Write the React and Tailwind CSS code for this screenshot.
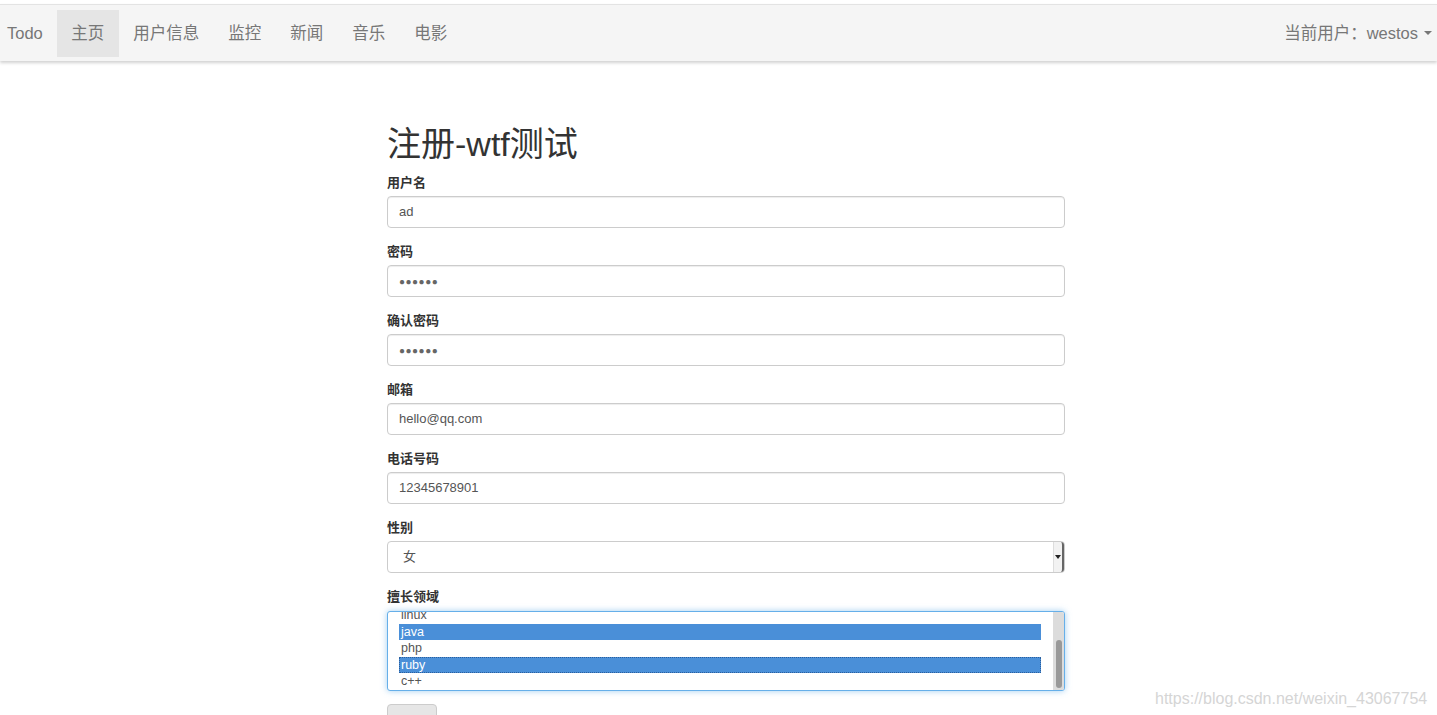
import React from "react";

const font = { fontFamily: '"Liberation Sans", "Noto Sans CJK SC", Arial, sans-serif' };

function Field({ label, children }) {
  return (
    <div className="mb-[14px]">
      <div className="h-[19px] mb-[4px] text-[13px] font-bold text-[#333] leading-[19px]">{label}</div>
      {children}
    </div>
  );
}

function Input({ value, dots }) {
  return (
    <div className="h-[32px] w-full rounded-[4px] border border-[#ccc] bg-white px-[11px] flex items-center text-[13px] text-[#555] shadow-[inset_0_1px_1px_rgba(0,0,0,0.075)]">
      {dots ? <span className="tracking-[0.5px] text-[#666] text-[10px]">●●●●●●</span> : value}
    </div>
  );
}

export default function App() {
  const navItems = ["主页", "用户信息", "监控", "新闻", "音乐", "电影"];
  return (
    <div className="relative min-h-[715px] bg-white overflow-hidden" style={font}>
      <div className="pt-[4px]">
        <div className="h-[57px] bg-[#f5f5f5] border-t border-[#e3e3e3] shadow-[0_2px_3px_rgba(0,0,0,0.18)] flex items-center justify-between">
          <div className="flex items-center h-full">
            <div className="pl-[7px] pr-[14px] text-[16.5px] text-[#777]">Todo</div>
            {navItems.map((n, i) => (
              <div
                key={n}
                className={
                  "h-[47px] flex items-center px-[14.5px] text-[16.5px] text-[#777] " +
                  (i === 0 ? "bg-[#e5e5e5] text-[#555]" : "")
                }
              >
                {n}
              </div>
            ))}
          </div>
          <div className="pr-[5px] flex items-center text-[16.5px] text-[#777]">
            当前用户：westos
            <span className="ml-[6px] inline-block w-0 h-0 border-l-[4px] border-r-[4px] border-t-[4px] border-l-transparent border-r-transparent border-t-[#777]" />
          </div>
        </div>
      </div>

      <div className="ml-[387px] w-[678px] mt-[65px]">
        <h1 className="text-[34px] leading-[37px] text-[#333] mb-[10px]">注册-wtf测试</h1>
        <Field label="用户名"><Input value="ad" /></Field>
        <Field label="密码"><Input dots /></Field>
        <Field label="确认密码"><Input dots /></Field>
        <Field label="邮箱"><Input value="hello@qq.com" /></Field>
        <Field label="电话号码"><Input value="12345678901" /></Field>
        <Field label="性别">
          <div className="h-[32px] w-full rounded-[4px] border border-[#ccc] bg-white flex items-center justify-between text-[13px] text-[#555]">
            <span className="pl-[15px]">女</span>
            <div className="h-[30px] w-[11px] border-l border-[#ddd] bg-[#f2f2f2] border-r-2 border-r-[#666] rounded-r-[3px] flex items-center justify-center">
              <span className="inline-block w-0 h-0 border-l-[3px] border-r-[3px] border-t-[4px] border-l-transparent border-r-transparent border-t-[#222]" />
            </div>
          </div>
        </Field>
        <div>
          <div className="h-[19px] mb-[5px] text-[13px] font-bold text-[#333] leading-[19px]">擅长领域</div>
          <div className="h-[80px] w-full rounded-[3px] border border-[#66afe9] bg-white shadow-[0_0_6px_rgba(102,175,233,0.6)] flex overflow-hidden">
            <div className="flex-1 pl-[11px] pr-[12px] text-[12.5px] leading-[16.5px] text-[#555] -mt-[5px]">
              <div className="pl-[2px] h-[16.5px]">linux</div>
              <div className="pl-[2px] h-[16.5px] bg-[#4a8fd8] text-white">java</div>
              <div className="pl-[2px] h-[16.5px]">php</div>
              <div className="pl-[2px] h-[16.5px] bg-[#4a8fd8] text-white outline-1 outline-dotted outline-[#2a5f9e] -outline-offset-1">ruby</div>
              <div className="pl-[2px] h-[16.5px]">c++</div>
            </div>
            <div className="w-[11px] h-full bg-[#dcdcdc] flex flex-col justify-end pb-[2px] items-center">
              <div className="w-[6px] h-[48px] rounded-[3px] bg-[#999]" />
            </div>
          </div>
        </div>
        <div className="mt-[13px] w-[50px] h-[30px] rounded-[4px] border border-[#ccc] bg-[#e6e6e6]" />
      </div>

      <div className="absolute left-[1155px] top-[687px] text-[16px] text-[#d5d5d5]">
        https://blog.csdn.net/weixin_43067754
      </div>
    </div>
  );
}
